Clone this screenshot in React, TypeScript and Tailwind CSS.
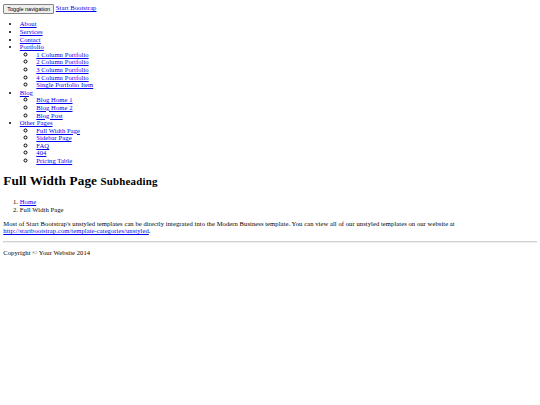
import React from "react";

const A = ({ children }: { children: React.ReactNode }) => (
  <a href="#" className="text-[#0000ee] underline">
    {children}
  </a>
);

export default function App() {
  const sub = (items: string[]) => (
    <ul className="list-[circle] pl-[16.5px] marker:text-[8.5px]">
      {items.map((t) => (
        <li key={t}>
          <A>{t}</A>
        </li>
      ))}
    </ul>
  );
  return (
    <div className="p-[3.3px] font-['Liberation_Serif',serif] text-[6.6px] leading-[7.6px] tracking-[0.06px] text-black bg-white min-h-[405px]">
      <div className="leading-[9.5px]">
        <button className="font-['Liberation_Sans',sans-serif] text-[5.5px] leading-[normal] tracking-normal bg-[#efefef] border border-[#858585] rounded-[1px] px-[3px] py-[1px] align-middle">
          Toggle navigation
        </button>{" "}
        <A>Start Bootstrap</A>
      </div>
      <ul className="list-disc pl-[16.5px] my-[6.6px]">
        <li>
          <A>About</A>
        </li>
        <li>
          <A>Services</A>
        </li>
        <li>
          <A>Contact</A>
        </li>
        <li>
          <A>Portfolio</A>
          {sub([
            "1 Column Portfolio",
            "2 Column Portfolio",
            "3 Column Portfolio",
            "4 Column Portfolio",
            "Single Portfolio Item",
          ])}
        </li>
        <li>
          <A>Blog</A>
          {sub(["Blog Home 1", "Blog Home 2", "Blog Post"])}
        </li>
        <li>
          <A>Other Pages</A>
          {sub(["Full Width Page", "Sidebar Page", "FAQ", "404", "Pricing Table"])}
        </li>
      </ul>
      <h1 className="text-[13.2px] font-bold leading-[15.2px] tracking-[0.13px] my-[8.6px]">
        Full Width Page <small className="text-[10.9px] tracking-[0.2px]">Subheading</small>
      </h1>
      <ol className="list-decimal pl-[16.5px] my-[6.2px]">
        <li>
          <A>Home</A>
        </li>
        <li>Full Width Page</li>
      </ol>
      <p className="my-[6.4px]">
        Most of Start Bootstrap's unstyled templates can be directly integrated into the Modern Business template. You can view all of our unstyled templates on our website at{" "}
        <A>http://startbootstrap.com/template-categories/unstyled</A>.
      </p>
      <hr className="my-[3px] border-t-[1px] border-b-[1px] border-t-[#d0d0d0] border-b-[#eeeeee]" />
      <p className="my-[6px]">Copyright © Your Website 2014</p>
    </div>
  );
}
